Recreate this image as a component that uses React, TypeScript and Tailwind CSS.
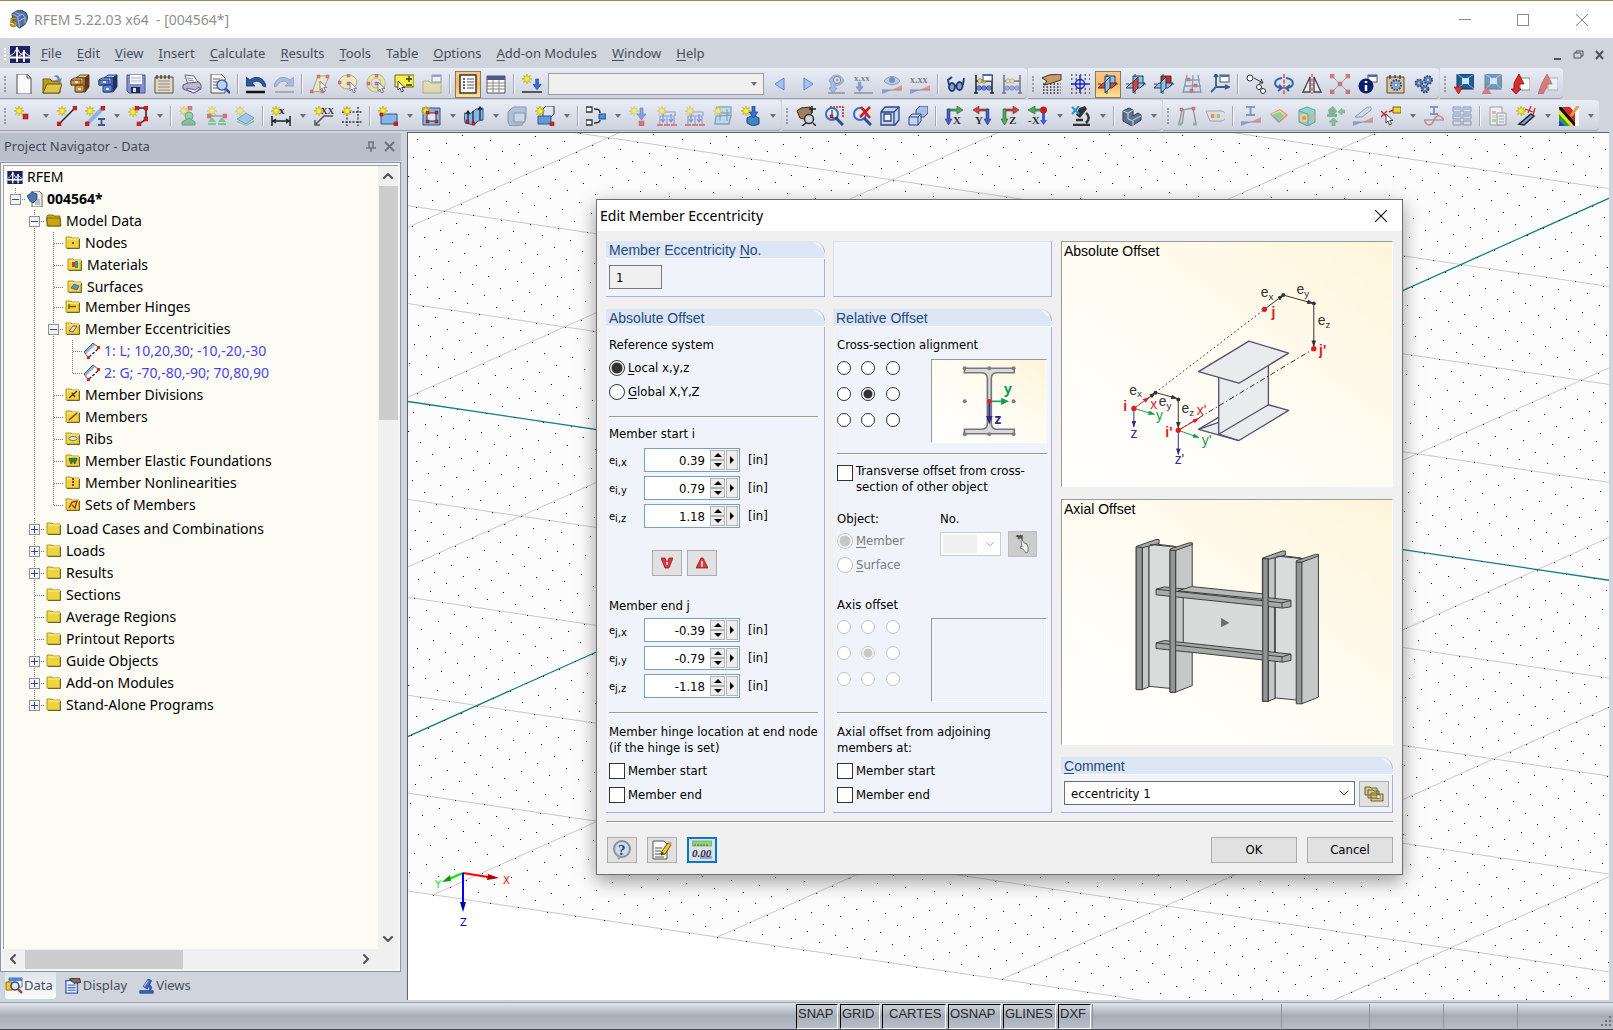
import { useState, type ReactNode } from 'react';
import { ChevronDown, ChevronLeft, ChevronRight, ChevronUp } from 'lucide-react';

const UI_FONT = "font-['Noto_Sans','Open_Sans',sans-serif]";
const DIALOG_FONT = "font-['DejaVu_Sans_Condensed','DejaVu_Sans',sans-serif]";
const HEAD_FONT = "font-['Liberation_Sans',Arial,sans-serif]";

/* ---------- small icon parts ---------- */

const Star = ({ x = 0, y = 0 }: { x?: number; y?: number }) => (
  <path
    transform={`translate(${x} ${y})`}
    d="M5 0l.9 3 2.6-1.6L6.9 4 10 5l-3.1.9 1.6 2.7L5.900 7 5 10l-.9-3-2.600 1.600L3.100 5.900 0 5l3.100-1L1.500 1.400 4.100 3z"
    fill="#fbee2c"
    stroke="#b5a820"
    strokeWidth=".6"
  />
);

const Dot = ({ x, y, s = 4 }: { x: number; y: number; s?: number }) => (
  <rect x={x} y={y} width={s} height={s} fill="#e01f1f" stroke="#8d1010" strokeWidth=".5" />
);

const Pointer = ({ x = 0, y = 0 }: { x?: number; y?: number }) => (
  <path
    transform={`translate(${x} ${y})`}
    d="M0 0v9l2-2 1.500 4 2-1-1.700-3.500H7z"
    fill="#fff"
    stroke="#333"
    strokeWidth=".9"
  />
);

const Slope = () => (
  <>
    <path d="M10 16l10-5v5z" fill="#ef5a5a" />
    <path d="M0 16h10L0 20z" fill="#5668e8" />
    <path d="M0 16h20" stroke="#555" />
  </>
);

const Caps = ({ children, x, y, size = 12, color = '#333' }: { children: string; x: number; y: number; size?: number; color?: string }) => (
  <text x={x} y={y} fontSize={size} fill={color} fontFamily="Liberation Serif" fontWeight="bold">{children}</text>
);

const Cabinet = ({ top, front, line }: { top: string; front: string; line: string }) => (
  <g stroke={line} strokeWidth=".9">
    <path d="M6 4l4-3h9l-4 3z" fill={top} />
    <path d="M15 4l4-3v12l-4 5z" fill={line} />
    <path d="M6 4h9v14H6z" fill={front} />
    <path d="M1 6l3-2h9v6l-2 1H1z" fill={top} />
    <path d="M1 6h10v5H1zM5 12l2-1h7v6l-2 1H5z" fill={front} />
    <path d="M5 8h3M8 15h3" stroke="#fff" strokeWidth="1.500" />
  </g>
);

const Planes = ({ a, b, c }: { a: string; b: string; c: string }) => (
  <g stroke="#16324f" strokeWidth=".9" strokeLinejoin="round">
    <path d="M7 2h10v10H7z" fill={a} />
    <path d="M0 14l5-5h14l-5 5z" fill={b} />
    <path d="M7 8l5-5v11l-5 5z" fill={c} />
    <path d="M9 0v20M0 10h20" stroke="#16324f" fill="none" strokeDasharray="3 14 3" />
  </g>
);

const Arrow3 = ({ h, v, label, flip }: { h: string; v: string; label: string; flip?: boolean }) => (
  <>
    <g transform={flip ? 'translate(20 0) scale(-1 1)' : undefined}>
      <path d="M4 3h9V0l6 4-6 4V5H4z" fill={h} stroke="#333" strokeWidth=".5" />
      <path d="M3 3h3v10h2l-3.500 6L1 13h2z" fill={v} stroke="#333" strokeWidth=".5" />
    </g>
    <Caps x={flip ? 3 : 9} y={18} size={11}>{label}</Caps>
  </>
);

const Abacus = () => (
  <>
    <path d="M2 1v18M18 1v18M0 19h4M16 19h4M2 7h16M2 14h16" stroke="#222" strokeWidth="1.500" fill="none" />
    <g fill="#e8dc8a" stroke="#6d6420" strokeWidth=".6"><circle cx="6" cy="7" r="2.200" /><circle cx="10" cy="7" r="2.200" /></g>
    <g fill="#6a88e6" stroke="#22307c" strokeWidth=".6"><circle cx="5" cy="14" r="2.300" /><circle cx="10" cy="14" r="2.300" /><circle cx="15" cy="14" r="2.300" /></g>
  </>
);

const Gear = ({ x, y, r, fill = '#5f86c8' }: { x: number; y: number; r: number; fill?: string }) => (
  <>
    <circle cx={x} cy={y} r={r} fill={fill} stroke="#27406f" strokeWidth="1.800" strokeDasharray="1.600 1.200" />
    <circle cx={x} cy={y} r={r * 0.35} fill="#fff" stroke="#27406f" strokeWidth=".5" />
  </>
);

const Frames = () => (
  <g fill="none" stroke="#5574b5" strokeWidth="1.200">
    <path d="M3 18V10h7v8M10 10h7v8M6 10V6h12v4" />
    <path d="M6 8v7M14 8v7M4 13l2 3 2-3M12 13l2 3 2-3" stroke="#2a56d8" />
    <path d="M0 19h6M7 19h6M14 19h6" stroke="#e03030" strokeWidth="2" />
  </g>
);

const DownArrow = ({ x = 0, y = 0 }: { x?: number; y?: number }) => (
  <path transform={`translate(${x} ${y})`} d="M3 0h3v6h3L4.500 12 0 6h3z" fill="#3d6fd8" stroke="#1e3d88" strokeWidth=".7" />
);

const Screen = ({ up }: { up?: boolean }) => (
  <>
    <path d="M3 0h17v15H3z" fill="#1f5f96" stroke="#0f3255" />
    <path d="M3 0l6 4M20 0l-6 4M3 15l6-5M20 15l-6-5" stroke="#7db3dd" />
    <path d="M8 4h7v6H8z" fill="#cfe4f5" />
    <path d={up ? 'M0 20h9l-4.500-7z' : 'M0 13h9l-4.500 7z'} fill="#e43030" stroke="#8d1010" strokeWidth=".6" />
  </>
);

const Window = ({ x, y }: { x: number; y: number }) => (
  <>
    <rect x={x} y={y} width="9" height="7" fill="#fff" stroke="#555" />
    <path d={`M${x} ${y + 1}h9`} stroke="#4a6cc0" strokeWidth="2" />
  </>
);

const icons: Record<string, ReactNode> = {
  newDoc: <path d="M3 0h10l4 4v16H3zM13 0v4h4" fill="#fbfbfd" stroke="#555" />,
  open: <><path d="M1 5h7l2 2h8v12H1z" fill="#b79a22" stroke="#6d5a0e" /><path d="M1 19l4-9h15l-3 9z" fill="#dcc54a" stroke="#6d5a0e" /><path d="M11 3c3-3 6-2 7 2l2-1-2 5-4-3 2-.5C15 3 13 2 11 3z" fill="#5d86b8" /></>,
  cabinetBrown: <Cabinet top="#f0c890" front="#cd9148" line="#5a3812" />,
  cabinetBlue: <Cabinet top="#a9c2f2" front="#5880d8" line="#1d3168" />,
  save: <><path d="M1 1h18v18H3l-2-2z" fill="#7f8fd0" stroke="#4a5590" /><path d="M4 1h12v9H4z" fill="#f5f5f8" /><path d="M5 4h10M5 7h10" stroke="#b0b4c8" /><path d="M5 13h9v6H5z" fill="#222a4e" /><path d="M7 14h3v4H7z" fill="#dde" /></>,
  notes: <><path d="M1 3h18v16H1z" fill="#e5d9c4" stroke="#5b5243" /><path d="M4 7h12M4 10h12M4 13h12M4 16h12" stroke="#888" /><path d="M3 1v4M7 1v4M11 1v4M15 1v4" stroke="#444" strokeWidth="1.500" /></>,
  print: <><path d="M3 1l9 1 5 8-11 1z" fill="#fff" stroke="#667" /><path d="M5 4l6 1M6 6l6 1" stroke="#889" /><path d="M1 11l5-2 11-1 2 3v4l-7 4-11-4z" fill="#b9bccb" stroke="#55586a" /><path d="M5 14l8 2 4-3v3l-5 3-7-3z" fill="#f6f6fb" stroke="#6a55a0" /></>,
  preview: <><path d="M1 0h10l4 4v15H1z" fill="#f4f4f4" stroke="#555" /><path d="M3 5h7M3 8h8M3 11h6M3 14h5" stroke="#666" /><circle cx="12" cy="11" r="5" fill="#b9d5f3" stroke="#3c66ae" strokeWidth="1.500" /><path d="M16 15l4 4" stroke="#2d4f90" strokeWidth="2.500" /></>,
  undo: <><path d="M0 3v9h9L6 9c4-3 9-2 11 3l3 1C19 3 9 1 4 6z" fill="#2d5799" stroke="#173566" strokeWidth=".8" /><path d="M0 18h19" stroke="#111" strokeWidth="2.500" /></>,
  redo: <><path d="M20 3v9h-9l3-3C10 6 5 7 3 12l-3 1C1 3 11 1 16 6z" fill="#7fa0cc" stroke="#4a6a98" strokeWidth=".8" /><path d="M1 18h19" stroke="#888" strokeWidth="2" /></>,
  selRhomb: <><path d="M2 18L8 2h11l-6 15z" fill="#f5efa9" stroke="#7a6e3a" /><Dot x={0} y={16} s={3} /><Dot x={7} y={1} s={3} /><Dot x={16} y={1} s={3} /><Dot x={11} y={16} s={3} /><Pointer x={10} y={7} /></>,
  selEllipse: <><ellipse cx="10" cy="8" rx="9" ry="7" fill="#f7f0a0" stroke="#8b7f4a" /><Dot x={0} y={7} s={3} /><Dot x={9} y={0} s={3} /><Dot x={9} y={8} s={3} /><Pointer x={12} y={8} /></>,
  selRing: <><circle cx="10" cy="9" r="7" fill="none" stroke="#8b7f4a" strokeWidth="5" /><circle cx="10" cy="9" r="7" fill="none" stroke="#f7ea5c" strokeWidth="3.500" /><Dot x={9} y={8} s={3} /><Dot x={1} y={8} s={3} /><Dot x={9} y={0} s={3} /><Pointer x={12} y={8} /></>,
  selPlus: <><path d="M1 1h19v12H1z" fill="#f9ee43" stroke="#6f6718" /><path d="M12 5h6M15 2v6M12 11h6" stroke="#333" strokeWidth="1.300" /><Pointer x={4} y={7} /></>,
  folderWin: <><path d="M1 7h6l2 2h10v10H1z" fill="#e5dd83" stroke="#8f8848" /><Window x={10} y={1} /></>,
  navigator: <><path d="M2 1h16v18H2z" fill="#fff" stroke="#333" strokeWidth="1.500" /><path d="M5 5h2M5 8h2M5 11h2M5 14h2" stroke="#333" strokeWidth="1.500" /><path d="M9 5h7M9 8h7M9 11h7M9 14h7" stroke="#555" /></>,
  table: <><path d="M1 2h18v17H1z" fill="#fff" stroke="#555" /><path d="M1 2h18v4H1z" fill="#4b5a86" /><path d="M1 9h18M1 12h18M1 15h18M7 6v13M13 6v13" stroke="#888" /></>,
  loadStar: <><Star /><g transform="translate(11 5) scale(.9)"><DownArrow /></g><path d="M0 18h20" stroke="#555" strokeWidth="2" /></>,
  prev: <path d="M14 4v12L5 10z" fill="#a9c2f2" stroke="#5d82cc" />,
  next: <path d="M6 4v12l9-6z" fill="#a9c2f2" stroke="#5d82cc" />,
  eyeArrow: <><path d="M3 7c3-8 12-8 15 0-3 4-6 5-9 4v3h2l-4 5-4-5h2V9z" fill="#7ca0dd" stroke="#3d5c99" strokeWidth=".8" /><circle cx="11" cy="6" r="3.500" fill="#fff" stroke="#223" /><circle cx="11" cy="6" r="1.500" fill="#3d5c99" /><path d="M2 19h17" stroke="#777" strokeWidth="2" /></>,
  xxArrow: <><Caps x={0} y={7} size={9}>x.xx</Caps><g transform="translate(2 8) scale(.8)"><DownArrow /></g><path d="M0 19h19" stroke="#777" strokeWidth="2" /></>,
  eyeSlope: <><path d="M2 7c4-6 12-6 16 0-4 5-12 5-16 0z" fill="#9db9ea" stroke="#4a5f8a" /><circle cx="10" cy="6" r="3" fill="#2d4a86" /><Slope /></>,
  xxSlope: <><Caps x={0} y={9} size={10}>x.xx</Caps><Slope /></>,
  glasses: <g fill="#7f9fd6" stroke="#22396d" strokeWidth="1.800"><ellipse cx="6" cy="13" rx="3" ry="4" /><ellipse cx="13.500" cy="12" rx="3" ry="4" /><path d="M3 11L2 6l4-3M17 11l1-7M9 12l2-1" fill="none" /></g>,
  abacusWin: <><Abacus /><Window x={9} y={0} /></>,
  abacus: <Abacus />,
  handGrid: <><path d="M1 10h18M1 13h18M1 16h18M1 19h18" stroke="#333" strokeWidth="1.500" strokeDasharray="1.500 2" /><path d="M0 4l7-3 12-1v6l-9 3-8 2 3-4z" fill="#c99b6b" stroke="#4a3118" /></>,
  gridBlue: <><path d="M1 1h19M1 5h19M1 10h19M1 15h19M1 19h19" stroke="#444" strokeWidth="1.300" strokeDasharray="1.500 3" /><circle cx="10" cy="10" r="4.500" fill="none" stroke="#1c2ac4" strokeWidth="1.500" /><path d="M10 1v18M1 10h18" stroke="#1c2ac4" strokeWidth="1.500" /></>,
  planeXY: <Planes a="#8fc0e6" b="#e4402c" c="#8fc0e6" />,
  planeYZ: <Planes a="#8fc0e6" b="#8fc0e6" c="#e4402c" />,
  planeXZ: <Planes a="#e8201c" b="#8fc0e6" c="#8fc0e6" />,
  gridLines: <><path d="M5 1L1 19M11 1l-1 18M16 1l3 18M3 6h15M2 12h17M1 18h18" stroke="#44688f" strokeWidth="1.300" fill="none" /><Dot x={5} y={4} s={3} /><Dot x={12} y={10} s={3} /><Dot x={8} y={15} s={3} /></>,
  axesWin: <><path d="M6 1v12l-5 5M6 13h12M4 3l2-3 2 3M15 11l4 2-4 2" fill="none" stroke="#3a5a92" strokeWidth="1.800" /><Window x={10} y={1} /></>,
  copy: <g fill="#fff" stroke="#333"><circle cx="4" cy="4" r="3" /><circle cx="13" cy="13" r="2.500" /><circle cx="17" cy="17" r="2.500" /><path d="M8 4l9 5M17 9l-2-4M17 9h-4" /></g>,
  rotate: <><path d="M8 4C-1 5-1 13 7 14M12 4c9 1 9 9 1 10M5 11l3 3-4 3M16 11l-4 3 3 3" fill="none" stroke="#2f64a8" strokeWidth="2" /><path d="M10 0v20" stroke="#e03030" strokeWidth="1.300" strokeDasharray="4 1.500" /></>,
  mirror: <><path d="M8 3v15H1zM12 3v15h7z" fill="#eee" stroke="#444" strokeWidth="1.300" /><path d="M10 0v20" stroke="#e03030" strokeDasharray="3 1.500" /></>,
  nodesX: <><path d="M3 3l14 14M17 3L3 17" stroke="#777" /><Dot x={0} y={0} /><Dot x={16} y={0} /><Dot x={0} y={16} /><Dot x={16} y={16} /><Dot x={8} y={8} /></>,
  info: <><Window x={10} y={1} /><circle cx="8" cy="12" r="7.500" fill="#0c1d6c" /><path d="M8 7v2M8 11v6" stroke="#fff" strokeWidth="2.500" /></>,
  gearPanel: <><path d="M1 3h17v16H1z" fill="#d9c39a" stroke="#5c4a27" /><Gear x={10} y={11} r={5} fill="#8ba9dc" /><path d="M4 1v4M9 1v3M14 1v4" stroke="#444" strokeWidth="1.500" /></>,
  gears: <><Gear x={14} y={6} r={4} /><Gear x={5} y={9} r={3.5} /><Gear x={11} y={15} r={3.5} /></>,
  screenDown: <Screen />,
  screenUp: <Screen up />,
  redDown: <><path d="M10 4h10v12H10z" fill="#fff" stroke="#888" /><path d="M9 0l5 10H9v5h2l-5 5-5-5h3V9z" fill="#dd2a2a" stroke="#7b0f0f" strokeWidth=".8" /></>,
  redUp: <><path d="M10 4h10v12H10z" fill="#fff" stroke="#888" /><path d="M9 0l5 10H9v4H8l-3 6H0l4-11z" fill="#dd2a2a" stroke="#7b0f0f" strokeWidth=".8" /></>,

  node: <><Star /><Dot x={9} y={8} s={5} /></>,
  line: <><path d="M2 18L18 2" stroke="#222" strokeWidth="1.500" /><Star /><Dot x={0} y={16} /><Dot x={16} y={0} /></>,
  member: <><path d="M3 17L18 2" stroke="#8db4e2" strokeWidth="4" /><Star /><Dot x={0} y={16} /><Dot x={16} y={0} /><path d="M13 13h7M13 19h7M16.500 13v6" stroke="#3a5a92" strokeWidth="1.800" /></>,
  polyline: <><path d="M8 2h10v11l-7 5" fill="none" stroke="#222" strokeWidth="1.500" /><Star y={1} /><Dot x={7} y={0} /><Dot x={16} y={0} /><Dot x={16} y={11} /><Dot x={9} y={16} /></>,
  supportNode: <><Star /><Dot x={9} y={0} /><ellipse cx="10" cy="10" rx="4" ry="4" fill="#5cc878" stroke="#1f6c35" /><path d="M10 12l6 4v3H3v-3z" fill="#3fae5b" stroke="#1f6c35" /></>,
  supportLine: <><Star /><path d="M2 10h16" stroke="#333" /><Dot x={0} y={8} /><Dot x={16} y={8} /><path d="M5 11l4 5H1zM15 11l4 5h-8zM1 17h8v2H1zM11 17h8v2h-8z" fill="#3fae5b" /></>,
  supportSurf: <><path d="M2 13l9-6 8 5-8 6z" fill="#74b6e8" stroke="#2b6796" /><path d="M2 15l9 4 8-5v2l-8 4-9-4z" fill="#3fae5b" /><Star /></>,
  dimension: <><path d="M1 10v10M19 10v10M2 15h16M5 13l-3 2 3 2M15 13l3 2-3 2" stroke="#222" strokeWidth="1.500" fill="none" /><Star /><Caps x={8} y={8} size={11}>x</Caps></>,
  leader: <><path d="M19 10h-9l-9 9M1 14v5h5" stroke="#555" strokeWidth="1.500" fill="none" /><Star /><Caps x={7} y={8} size={9}>XX</Caps></>,
  gridNew: <><path d="M5 1v19M16 1v19M0 6h20M0 16h20" stroke="#333" strokeWidth="1.300" strokeDasharray="2 1.500" /><Star /></>,
  surface: <><path d="M3 8h16v10H3z" fill="#86b6e4" stroke="#2c5888" /><Star /><Dot x={2} y={7} s={3} /><Dot x={16} y={16} s={4} /></>,
  opening: <><path d="M2 2h17v17H2z" fill="#86b6e4" stroke="#2c5888" /><path d="M6 7h9v8H6z" fill="#dde7f1" stroke="#333" /><Star /><Dot x={5} y={5} s={3} /><Dot x={14} y={5} s={3} /><Dot x={5} y={14} s={3} /><Dot x={14} y={14} s={3} /></>,
  intersection: <><path d="M0 7l6 1 6-5 7-1v12l-5 1-4 4-9-2z" fill="#86b6e4" stroke="#2c5888" /><path d="M4 6v12M9 5v14M16 1v13M2 8l2-3 2 3M14 4l2-3 2 3" stroke="#222" strokeWidth="1.300" fill="none" /><Dot x={2} y={14} s={3} /><Dot x={8} y={16} s={3} /></>,
  solid: <><path d="M1 6l5-5h13v11l-4 7-12 1-2-4z" fill="#8ca5c8" stroke="#44597c" /><path d="M7 7h11v9H7z" fill="#c4d2e6" stroke="#44597c" /></>,
  solidNew: <><path d="M8 3l3-3h8v8l-3 3H8z" fill="#dde6f2" stroke="#333" /><path d="M3 10h13v8H3z" fill="#5e9bd8" stroke="#2c5888" /><Star /><Dot x={15} y={16} /></>,
  join: <><path d="M0 1h6v5H0zM0 14h6v5H0z" fill="#fff" stroke="#333" strokeWidth="1.300" /><path d="M8 3c5 0 6 1 6 4M8 17c5 0 6-1 6-3" fill="none" stroke="#333" strokeWidth="1.500" /><path d="M13 8h7v5h-7z" fill="#4a90e0" stroke="#1e4e8d" /></>,
  nodalLoad: <><Star /><DownArrow x={8} y={2} /><Dot x={10} y={15} s={5} /></>,
  frameLoad: <><Frames /><Star /></>,
  areaLoad: <><path d="M4 1h14v6H4zM3 10l15-1-2 9H2z" fill="#a7d8e4" stroke="#44789a" strokeWidth="1.500" /><path d="M7 3v12M14 3v12" stroke="#3456c8" /><Star /></>,
  solidLoad: <><path d="M6 12l6-3 6 3v6l-6 2-6-3z" fill="#3f86c4" stroke="#1d466d" /><DownArrow x={8} y={0} /><Star /></>,
  pan: <><path d="M1 5l4-3 9-1 2 5-2 5-6 2-4-1z" fill="#a07f5e" stroke="#33271a" /><circle cx="13" cy="13" r="4.500" fill="#d0d5da" stroke="#333" strokeWidth="1.500" /><path d="M10 17l-4 3M16 0v7M13 3h7M17 17l3 3" stroke="#222" strokeWidth="1.500" /></>,
  zoomWin: <><path d="M6 1h13v11" fill="none" stroke="#c22" strokeDasharray="2 1" strokeWidth="1.500" /><circle cx="8" cy="8" r="6" fill="#dceafa" stroke="#3c6cc4" strokeWidth="2" /><path d="M12 12l7 7" stroke="#2d4f90" strokeWidth="3" /><path d="M8 4v8h6" stroke="#222" fill="none" /><Dot x={6} y={9} s={3} /></>,
  zoomDel: <><circle cx="8" cy="8" r="6" fill="#dceafa" stroke="#3c6cc4" strokeWidth="2" /><path d="M12 12l7 7" stroke="#2d4f90" strokeWidth="3" /><path d="M9 1l9 11M18 1L8 11" stroke="#d61a1a" strokeWidth="2.500" /></>,
  box: <g fill="#c5d4ec" stroke="#2c4684" strokeWidth="1.300"><path d="M1 6l4-5h14v13l-4 5H1z" /><path d="M1 6h13v13M14 6l5-5" fill="none" /><path d="M4 8h7v7H4z" fill="#eef3fb" /></g>,
  boxes: <g fill="#a9bde4" stroke="#2c4684" strokeWidth="1"><path d="M8 4l4-4h8v7l-4 4H8z" /><path d="M1 11l3-3h9v7l-3 4H1z" fill="#c8d5f0" /><path d="M1 11h9v8M10 11l3-3" fill="none" /></g>,
  viewX: <Arrow3 h="#3db54a" v="#3b5be0" label="X" />,
  viewY: <Arrow3 h="#e03a3a" v="#3b5be0" label="Y" flip />,
  viewZ: <Arrow3 h="#e03a3a" v="#3db54a" label="Z" />,
  viewMinusX: <><path d="M15 3H7V0L0 4l7 4V5h8z" fill="#3db54a" stroke="#333" strokeWidth=".5" /><path d="M14 5h3v9h2l-3.500 5L12 14h2z" fill="#3b5be0" /><circle cx="15.500" cy="4" r="3.500" fill="#c81e1e" /><Caps x={0} y={18} size={11}>-X</Caps></>,
  microscope: <><path d="M8 2l6-2 2 3-7 9-4-3z" fill="#333" /><path d="M2 19h17M15 17c4-4 3-8 0-10M5 14h7" fill="none" stroke="#333" strokeWidth="2.500" /><path d="M1 1l7 7M8 0L1 8" stroke="#2f8fe0" strokeWidth="2" /></>,
  lBlock: <><path d="M1 5l6-3 4 2v6l5-3 3 2v5l-9 6-9-5z" fill="#5e748e" stroke="#2b3a4e" /><path d="M1 5l5 2v6l5 2v5M6 7l5-3M11 14l8-4" fill="none" stroke="#cfdae6" /></>,
  deformed: <><path d="M2 18L5 4l11-2 3 16M5 18L7 5" fill="none" stroke="#555" strokeWidth="1.300" /><Dot x={3} y={2} s={3} /><Dot x={15} y={1} s={3} /><path d="M1 18h4M16 18h4" stroke="#3fae5b" strokeWidth="3" /></>,
  scale: <><path d="M1 5h15a4 4 0 010 10H5z" fill="#ddd" stroke="#777" /><path d="M6 8h3v4H6z" fill="#e33" /><path d="M9 8h3v4H9z" fill="#ec3" /><path d="M12 8h3v4h-3z" fill="#4b5" /></>,
  forces: <><path d="M5 1h9M5 9h9M9.500 1v8" stroke="#3a5a92" strokeWidth="2" /><Slope /></>,
  surfColor: <><path d="M1 8l10-5 8 6-9 8z" fill="#e43b2f" /><path d="M2 8l9-4 6 5-7 6z" fill="#f5d431" /><path d="M3 9l8-3 4 4-6 5z" fill="#4fc15c" /><path d="M1 8l2 1 6 5 1 3z" fill="#3f62dd" /></>,
  cubeColor: <><path d="M2 4l8-3 8 3v12l-7 4-9-4z" fill="#4fc8b8" stroke="#25605a" /><circle cx="7" cy="12" r="4" fill="#f5d431" /><circle cx="7" cy="12" r="2" fill="#e43b2f" /><circle cx="15" cy="11" r="2.500" fill="#e88b2f" /><path d="M2 5l9 3v11" fill="none" stroke="#25605a" /></>,
  reactions: <><path d="M8 0l4 5-2 3H4L3 4zM2 8h10v3H2z" fill="#3b8f4e" /><path d="M8 12l-4 4h3v4h3v-4h3zM20 4h-3V2l-4 4 4 3V7h3z" fill="#3fae5b" stroke="#1f6c35" strokeWidth=".5" /></>,
  section: <><path d="M2 11L13 2c4-2 6-1 5 2l-9 7z" fill="#c8d6e8" stroke="#44597c" /><Slope /></>,
  valuePick: <><path d="M12 1h8v6h-8z" fill="#f0d238" stroke="#77661a" /><path d="M0 5l6 6M6 5l-6 6M8 6l4-2" stroke="#d02a2a" strokeWidth="1.500" /><Pointer x={5} y={8} /></>,
  diagram: <><path d="M6 1h8M6 8h8M10 1v7" stroke="#3a5a92" strokeWidth="2" /><path d="M0 14h20" stroke="#444" /><path d="M0 14c4 8 8 5 10 0 3-6 7-5 10 0" fill="none" stroke="#e03030" strokeWidth="1.500" /></>,
  tiles: <><path d="M1 1h8v5H1zM11 1h8v5h-8zM1 8h8v5H1zM11 8h8v5h-8zM1 15h8v4H1zM11 15h8v4h-8z" fill="#d7e0ef" stroke="#4a5f8a" /><path d="M2 3h6M12 3h6M2 10h6M12 10h6" stroke="#3456c8" /></>,
  report: <><path d="M2 1h12v18H2z" fill="#fff" stroke="#666" /><path d="M4 5h4v3H4z" fill="#e88" /><path d="M4 9h4v3H4z" fill="#dd6" /><path d="M4 13h4v3H4z" fill="#6c8" /><path d="M9 7h9v12H9z" fill="#f4f4f8" stroke="#666" /><path d="M11 10h5M11 13h5M11 16h5" stroke="#777" /></>,
  resultNew: <><path d="M3 18L15 8l3 2-10 9z" fill="#7fa2d8" stroke="#222" strokeWidth="1.500" /><path d="M9 3l8 3M15 0l-3 7M17 9l2-7" stroke="#d02a2a" strokeWidth="1.300" /><Star /></>,
  palette: <><path d="M0 1h20v19H0z" fill="#fff" /><path d="M0 1h3l13 15v4h-3L0 5z" fill="#111" /><path d="M0 3l15 17H9L0 10z" fill="#f4e01e" /><path d="M0 8l11 12H5L0 14z" fill="#23a33a" /><path d="M0 14l6 6H0z" fill="#2340d8" /><path d="M3 1h8l5 6v9z" fill="#e22121" /><path d="M19 0l-7 10" stroke="#d9a24b" strokeWidth="3" /></>,
};

/* ---------- toolbars ---------- */

// "|" separator, "v" drop-down arrow, leading "~" disabled, leading "!" pressed, "combo" the load case list
const rowOne = [
  'newDoc open cabinetBrown cabinetBlue save notes print preview | undo ~redo | ~selRhomb ~selEllipse ~selRing selPlus ~folderWin | !navigator table | loadStar combo prev next ~eyeArrow ~xxArrow ~eyeSlope ~xxSlope | glasses abacusWin ~abacus',
  'handGrid gridBlue !planeXY planeYZ planeXZ ~gridLines axesWin | copy rotate mirror ~nodesX info gearPanel gears',
  'screenDown ~screenUp redDown ~redUp',
];
const rowTwo = [
  'node v line member v polyline v | ~supportNode ~supportLine ~supportSurf | dimension v leader gridNew | surface v opening v intersection v ~solid solidNew v | join v ~nodalLoad ~frameLoad ~frameLoad ~areaLoad solidLoad v',
  'pan zoomWin zoomDel box boxes | viewX viewY viewZ viewMinusX v microscope v | lBlock v',
  '~deformed ~scale | ~forces ~surfColor ~cubeColor ~reactions ~section valuePick v ~diagram ~tiles | ~report resultNew v palette v',
];

function ToolIcon({ name }: { name: string }) {
  return <svg viewBox="0 0 20 20" className="size-5">{icons[name]}</svg>;
}

function ToolItem({ token }: { token: string }) {
  if (token === '|') return <span className="mx-[3px] h-5 w-0.5 shrink-0 border-l border-[#a3a8b4] bg-[#f5f7fb]" />;
  if (token === 'v') {
    return (
      <button aria-label="More" className="flex h-6 w-[15px] shrink-0 items-center justify-center">
        <span className="border-x-[3px] border-t-4 border-x-transparent border-t-[#6b7078]" />
      </button>
    );
  }
  if (token === 'combo') {
    return (
      <div className="mx-0.5 flex h-[22px] w-[216px] shrink-0 items-center justify-end border border-[#9a9da3] bg-[#f0f0f0] px-1.5">
        <button aria-label="Load case" className="border-x-[3px] border-t-4 border-x-transparent border-t-[#6b7078]" />
      </div>
    );
  }
  const name = token.replace(/^[~!]/, '');
  if (token[0] === '!') {
    return (
      <button aria-label={name} aria-pressed="true" className="mx-px flex h-[27px] w-[26px] shrink-0 items-center justify-center border border-[#8a7a5c] bg-linear-to-b from-[#f8c88c] via-[#fbb75c] to-[#fde49a]">
        <ToolIcon name={name} />
      </button>
    );
  }
  return (
    <button aria-label={name} disabled={token[0] === '~'} className="flex h-6 w-7 shrink-0 items-center justify-center disabled:opacity-55">
      <ToolIcon name={name} />
    </button>
  );
}

function ToolbarRow({ groups }: { groups: string[] }) {
  return (
    <div className="flex h-8 gap-px overflow-hidden">
      {groups.map((g) => (
        <div key={g} role="toolbar" className="flex h-[31px] shrink-0 items-center rounded-r-sm border-b border-[#9fa3ad] bg-linear-to-b from-[#e9edf6] to-[#cdd2de] pt-0.5 pr-px">
          <span className="mr-[3px] ml-1 h-4 w-[3px] border-l-2 border-dotted border-[#9a9fab]" />
          {g.split(' ').map((t, i) => <ToolItem key={i} token={t} />)}
        </div>
      ))}
    </div>
  );
}

/* ---------- title and menu ---------- */

const menus = ['_File', '_Edit', '_View', '_Insert', '_Calculate', '_Results', '_Tools', 'Ta_ble', '_Options', '_Add-on Modules', '_Window', '_Help'];

// the letter after "_" is the access key
function Mnemonic({ text }: { text: string }) {
  const i = text.indexOf('_');
  if (i < 0) return <>{text}</>;
  return <>{text.slice(0, i)}<span className="underline underline-offset-2">{text[i + 1]}</span>{text.slice(i + 2)}</>;
}

const Bridge = ({ className }: { className: string }) => (
  <svg viewBox="0 0 20 17" className={className}>
    <path d="M0 0h20v17H0z" fill="#1d2260" />
    <path d="M7 1v15M14 4v12" stroke="#fff" strokeWidth="1.800" />
    <path d="M7 2Q5 8 0 10M7 2q2 6 7 8M14 5q2 4 6 5M14 5q-2 4-5 5" stroke="#fff" fill="none" />
    <path d="M0 10.500h20v2H0z" fill="#fff" />
  </svg>
);

function TitleBar() {
  return (
    <header className="flex h-[38px] items-center border-t border-[#9a8a50] bg-white pr-0.5 pl-[9px]">
      <svg viewBox="0 0 20 20" className="size-[19px]">
        <path d="M3 4l5-3 5-1 5 3 2 5-3 7-6 4-6-5z" fill="#5673a3" stroke="#26395b" />
        <path d="M3 4l6 3 5-3M9 7l1 5 7-4M10 12l1 6M14 4l3 4v6M6 2l6 3" stroke="#a9bfe2" fill="none" />
        <text x="1" y="18" fontSize="13" fontWeight="bold" fill="#f2bd1d" stroke="#6a4d05" strokeWidth=".6" fontFamily="Liberation Sans">5</text>
      </svg>
      <h1 className="ml-1.5 text-[14px] whitespace-pre text-[#8f8f8f]">RFEM 5.22.03 x64  - [004564*]</h1>
      <div className="ml-auto flex text-[#8a8a8a]">
        <button aria-label="Minimize" className="flex h-9 w-[58px] items-center justify-center"><span className="h-px w-3 bg-current" /></button>
        <button aria-label="Maximize" className="flex h-9 w-[58px] items-center justify-center"><span className="size-3 border border-current" /></button>
        <button aria-label="Close" className="flex h-9 w-[59px] items-center justify-center">
          <svg viewBox="0 0 12 12" className="size-3"><path d="M0 0l12 12M12 0L0 12" stroke="currentColor" /></svg>
        </button>
      </div>
    </header>
  );
}

function MenuBar() {
  return (
    <nav className="flex h-[30px] items-center pt-0.5 pr-2 pl-1">
      <span className="mr-1 h-3 w-0.5 border-l-2 border-dotted border-white" />
      <Bridge className="h-[17px] w-5" />
      <div className="ml-[11px] flex gap-[15px]">
        {menus.map((m) => (
          <button key={m} className="text-[13px] text-[#474d5c]"><Mnemonic text={m} /></button>
        ))}
      </div>
      <svg viewBox="0 0 52 12" className="mt-0.5 ml-auto h-3 w-[52px]" fill="none" stroke="#50545c">
        <path d="M1 10h7" strokeWidth="2" />
        <path d="M21 4h7v5h-7zM23 4V2h7v5h-2" />
        <path d="M43 2l7 8M50 2l-7 8" strokeWidth="2" />
      </svg>
    </nav>
  );
}

/* ---------- project navigator ---------- */

type TreeNode = {
  depth: number;
  label: string;
  icon: string;
  rails: string; // one letter per column: "." blank, "|" pass through, "t" branch, "l" last branch
  toggle?: '+' | '-';
  extra?: string;
  row?: string;
};

const tree: TreeNode[] = [
  { depth: 1, label: '004564*', icon: 'doc', rails: 'l', toggle: '-', extra: 'font-bold' },
  { depth: 2, label: 'Model Data', icon: 'open', rails: '.t', toggle: '-' },
  { depth: 3, label: 'Nodes', icon: 'node', rails: '.|t' },
  { depth: 3, label: 'Materials', icon: 'material', rails: '.|t', extra: 'pl-0.5' },
  { depth: 3, label: 'Surfaces', icon: 'surface', rails: '.|t', extra: 'pl-0.5' },
  { depth: 3, label: 'Member Hinges', icon: 'hinge', rails: '.|t', row: '-mt-0.5' },
  { depth: 3, label: 'Member Eccentricities', icon: 'ecc', rails: '.|t', toggle: '-' },
  { depth: 4, label: '1: L; 10,20,30; -10,-20,-30', icon: 'eccItem', rails: '.||t', extra: 'text-[#4a44e8]' },
  { depth: 4, label: '2: G; -70,-80,-90; 70,80,90', icon: 'eccItem', rails: '.||l', extra: 'text-[#4a44e8]' },
  { depth: 3, label: 'Member Divisions', icon: 'division', rails: '.|t' },
  { depth: 3, label: 'Members', icon: 'member', rails: '.|t' },
  { depth: 3, label: 'Ribs', icon: 'rib', rails: '.|t' },
  { depth: 3, label: 'Member Elastic Foundations', icon: 'elastic', rails: '.|t' },
  { depth: 3, label: 'Member Nonlinearities', icon: 'nonlinear', rails: '.|t' },
  { depth: 3, label: 'Sets of Members', icon: 'sets', rails: '.|l' },
  { depth: 2, label: 'Load Cases and Combinations', icon: 'folder', rails: '.t', toggle: '+', row: 'mt-0.5' },
  { depth: 2, label: 'Loads', icon: 'folder', rails: '.t', toggle: '+' },
  { depth: 2, label: 'Results', icon: 'folder', rails: '.t', toggle: '+' },
  { depth: 2, label: 'Sections', icon: 'folder', rails: '.t' },
  { depth: 2, label: 'Average Regions', icon: 'folder', rails: '.t' },
  { depth: 2, label: 'Printout Reports', icon: 'folder', rails: '.t' },
  { depth: 2, label: 'Guide Objects', icon: 'folder', rails: '.t', toggle: '+' },
  { depth: 2, label: 'Add-on Modules', icon: 'folder', rails: '.t', toggle: '+' },
  { depth: 2, label: 'Stand-Alone Programs', icon: 'folder', rails: '.l', toggle: '+' },
];

const folderMarks: Record<string, ReactNode> = {
  node: <path d="M7 7h2v2H7z" fill="#d22" />,
  material: <><path d="M5 5h3v5H5z" fill="#d33" /><path d="M8 4h3v4H8z" fill="#38c" /><path d="M8 8h3v3H8z" fill="#2a5" /></>,
  surface: <path d="M4 9l3-4 5 2-2 4z" fill="#5b8fd6" stroke="#2c4c86" strokeWidth=".6" />,
  hinge: <path d="M4 5v5M4 7.500h7" stroke="#6a5508" strokeWidth="1.300" />,
  ecc: <path d="M4 10l4-5h4l-4 6z" fill="#dfe8f2" stroke="#833" strokeWidth=".9" />,
  division: <path d="M4 11l8-7M7 6l3 4" stroke="#633" strokeWidth="1.500" />,
  member: <path d="M4 11l8-7" stroke="#933" strokeWidth="1.500" />,
  rib: <ellipse cx="8" cy="7.500" rx="4" ry="2" fill="#eee" stroke="#555" strokeWidth=".8" />,
  elastic: <path d="M4 5h8v2l-2 4H9V9H7v2H6L4 7z" fill="#1f8a3c" stroke="#a33" strokeWidth=".5" />,
  nonlinear: <path d="M8 3v9" stroke="#c22" strokeWidth="2" strokeDasharray="2 1" />,
  sets: <path d="M4 11l3-6 5-1-2 7-3-3" fill="none" stroke="#a22" strokeWidth="1.300" />,
};

function TreeIcon({ icon }: { icon: string }) {
  if (icon === 'doc') {
    return (
      <svg viewBox="0 0 16 16" className="size-4">
        <path d="M5 0h7l3 3v13H5z" fill="#f2f2f2" stroke="#666" />
        <path d="M8 9h5M8 11h5M8 13h5" stroke="#888" />
        <path d="M0 5l5-4 5 2v5l-4 4-3-2z" fill="#4b74b0" stroke="#2a4068" strokeWidth=".8" />
      </svg>
    );
  }
  if (icon === 'eccItem') {
    return (
      <svg viewBox="0 0 16 16" className="size-4">
        <path d="M1 10l9-9" stroke="#8fb2dc" strokeWidth="3" />
        <path d="M0 9l9-9 5 4M0 9l4 5" stroke="#333" fill="none" strokeWidth=".8" />
        <path d="M5 14L15 5" stroke="#222" strokeWidth="1.200" strokeDasharray="3 1.500" />
        <path d="M3 13h3v3H3zM13 3h3v3h-3z" fill="#e02020" />
      </svg>
    );
  }
  return (
    <svg viewBox="0 0 16 16" className="size-4">
      {icon === 'open' ? (
        <path d="M1 13V3l1-1h5l1 1h6v10zM0 5h14l1 8H2z" fill="#c9a80f" stroke="#806a08" strokeWidth=".9" />
      ) : (
        <>
          <path d="M1 2h5l1 1h7v10H1z" fill="#efd53d" stroke="#b59a20" />
          <path d="M2 4h12" stroke="#faf0a0" />
          <path d="M14.500 4v9.500H2" fill="none" stroke="#6d6334" />
        </>
      )}
      {folderMarks[icon]}
    </svg>
  );
}

function Rail({ kind, toggle }: { kind: string; toggle?: '+' | '-' }) {
  return (
    <svg viewBox="0 0 19 22" className="h-[22px] w-[19px] shrink-0" fill="none" shapeRendering="crispEdges">
      <g stroke="#777" strokeDasharray="1 1">
        {(kind === '|' || kind === 't') && <path d="M9.500 0v22" />}
        {kind === 'l' && <path d="M9.500 0v11" />}
        {(kind === 't' || kind === 'l') && <path d="M10 11.500h9" />}
      </g>
      {toggle && (
        <>
          <rect x="4.500" y="6.500" width="10" height="10" fill="#f5f5f7" stroke="#8f8f8f" />
          <path d={toggle === '+' ? 'M6 11.500h7M9.500 8v7' : 'M6 11.500h7'} stroke="#2b4a9c" />
        </>
      )}
    </svg>
  );
}

function Navigator() {
  return (
    <aside className="flex w-[401px] shrink-0 flex-col pt-px">
      <div className="flex h-7 items-center justify-between bg-[#b9c0cc] pr-1.5 pl-1 text-[13px] text-[#434956]">
        <h2>Project Navigator - Data</h2>
        <svg viewBox="0 0 30 12" className="h-3 w-[30px]" fill="none" stroke="#6d727c" strokeWidth="1.500">
          <path d="M3 1h6M4 1v6M8 1v6M1 7h10M6 7v4" />
          <path d="M20 1l9 9M29 1l-9 9" strokeWidth="2" />
        </svg>
      </div>
      <div className="mt-px flex min-h-0 flex-1 flex-col border border-[#8f949f] bg-[#f4f6fa] px-0.5 py-0.5">
        <div className="flex min-h-0 flex-1 border-t border-l border-[#9a9fab] bg-[#fcfcf4]">
          <div className="min-w-0 flex-1 overflow-hidden text-[14px] leading-[22px] text-black">
            <div className="flex h-[22px] items-center gap-1 pl-[3px]">
              <Bridge className="h-[13px] w-4" />
              <span>RFEM</span>
            </div>
            <ul role="tree">
              {tree.map((n) => (
                <li key={n.label} role="treeitem" aria-level={n.depth} className={n.row}>
                  <div className="flex h-[22px] items-center pl-0.5">
                    {n.rails.split('').map((k, i) => (
                      <Rail key={i} kind={k} toggle={i === n.rails.length - 1 ? n.toggle : undefined} />
                    ))}
                    <span className={`ml-0.5 flex items-center gap-1 whitespace-nowrap ${n.extra ?? ''}`}>
                      <TreeIcon icon={n.icon} />
                      {n.label}
                    </span>
                  </div>
                </li>
              ))}
            </ul>
          </div>
          <div className="flex w-5 flex-col items-center bg-[#f0f0f0] text-[#505050]">
            <ChevronUp className="my-0.5 size-4" strokeWidth={3} />
            <div className="h-[234px] w-[19px] bg-[#cdcdcd]" />
            <ChevronDown className="mt-auto mb-0.5 size-4" strokeWidth={3} />
          </div>
        </div>
        <div className="flex h-5 items-center bg-[#f0f0f0] pr-6 pl-0.5 text-[#505050]">
          <ChevronLeft className="mr-1 size-4" strokeWidth={3} />
          <div className="h-[19px] w-[158px] bg-[#cdcdcd]" />
          <ChevronRight className="ml-auto size-4" strokeWidth={3} />
        </div>
      </div>
      <div role="tablist" className="flex h-[30px] items-start text-[13px] text-[#474d5c]">
        <button role="tab" aria-selected="true" className="ml-1 flex h-7 items-center gap-px rounded-b-sm border border-t-0 border-[#b9dce0] bg-linear-to-b from-[#dfe3eb] to-[#fbfbfb] pr-[3px]">
          <svg viewBox="0 0 18 18" className="size-[18px]"><path d="M4 1h13v9H4z" fill="#fff" stroke="#4a6cc0" /><path d="M4 1h13v3H4z" fill="#4a86e0" /><path d="M1 5h6v8H1z" fill="#f0c820" stroke="#8b7410" /><circle cx="10" cy="9" r="4" fill="#dbe9f8" stroke="#445" strokeWidth="1.500" /><path d="M13 12l4 4" stroke="#8a5a32" strokeWidth="2.500" /></svg>
          Data
        </button>
        <button role="tab" className="ml-2 flex h-7 items-center gap-0.5">
          <svg viewBox="0 0 18 18" className="size-4"><path d="M1 3h13v14H1z" fill="#eef3fd" stroke="#3c5eb4" strokeWidth="1.500" /><path d="M3 8h9M3 11h9M3 14h9" stroke="#4a76d8" strokeWidth="1.500" /><path d="M5 1l11-1 2 5-8 1z" fill="#86684c" stroke="#33271a" /></svg>
          Display
        </button>
        <button role="tab" className="ml-3 flex h-7 items-center gap-0.5">
          <svg viewBox="0 0 18 18" className="size-[15px]"><path d="M11 0l4 2-5 10-5-3zM1 14h16v3H1zM12 6c4 3 4 7 0 8" fill="#3c66c8" stroke="#223c86" /><path d="M11 2L6 9" stroke="#b9cdf5" strokeWidth="1.500" /></svg>
          Views
        </button>
      </div>
    </aside>
  );
}

/* ---------- work plane ---------- */

const ORIGIN = [561, 352];
const U = [284.2, 42.3];
const V = [164, -73.5];
const at = (a: number, b: number) => [ORIGIN[0] + a * U[0] + b * V[0], ORIGIN[1] + a * U[1] + b * V[1]];

function WorkPlane() {
  let dots = '';
  for (let i = -50; i <= 50; i++) {
    for (let j = -50; j <= 50; j++) {
      const [x, y] = at(i / 10, j / 10);
      if (x < 0 || y < 0 || x > 3000 || y > 2000) continue;
      dots += `M${Math.round(x)} ${Math.round(y)}h1v1h-1z`;
    }
  }
  const steps = [-5, -4, -3, -2, -1, 0, 1, 2, 3, 4, 5];
  const seg = (p: number[], q: number[]) => `M${p[0]} ${p[1]}L${q[0]} ${q[1]}`;
  const lines = steps.filter((s) => s !== 0).map((s) => seg(at(s, -5), at(s, 5)) + seg(at(-5, s), at(5, s))).join('');
  const plane = [at(-5, -5), at(5, -5), at(5, 5), at(-5, 5)].map((p) => p.join(',')).join(' ');

  return (
    <svg className="size-full" fill="none">
      <polygon points={plane} fill="#fcfcfc" />
      <path d={lines} stroke="#cacaca" />
      <path d={seg(at(-5, 0), at(5, 0)) + seg(at(0, -5), at(0, 5))} stroke="#13807f" strokeWidth="1.300" />
      <path d={dots} fill="#000" shapeRendering="crispEdges" />
      <g strokeWidth="2">
        <path d="M55 740l25 4" stroke="#ff0000" />
        <path d="M80 741l11 4-12 2z" fill="#b40000" />
        <path d="M55 740l-14 6" stroke="#00e800" />
        <path d="M42 742l-8 7 9-1z" fill="#0a9a0a" />
        <path d="M55 740v30" stroke="#0000ff" />
        <path d="M52 769h6l-3 10z" fill="#0000a0" />
      </g>
      <g fontSize="10" fontFamily="DejaVu Sans">
        <text x="95" y="751" fill="#ff0000">X</text>
        <text x="27" y="755" fill="#00e800">Y</text>
        <text x="52" y="793" fill="#0000c8">Z</text>
      </g>
    </svg>
  );
}

/* ---------- dialog ---------- */

function Group({ title, className = '', children }: { title?: string; className?: string; children?: ReactNode }) {
  return (
    <section className={`flex flex-col border-r border-b border-[#a9abec] bg-[#f0f4fa] ${title ? 'rounded-tr-xl' : 'border-t border-l border-t-[#d5e3f5] border-l-[#d5e3f5]'} ${className}`}>
      {title && (
        <h3 className={`-mr-px h-[18px] border-b border-white bg-[#dce6f5] pl-[3px] text-[14px] leading-[18px] text-[#1f4a7d] [clip-path:polygon(0_0,calc(100%-12px)_0,100%_12px,100%_100%,0_100%)] ${HEAD_FONT}`}>
          <Mnemonic text={title} />
        </h3>
      )}
      {children}
    </section>
  );
}

const Rule = ({ className = '' }: { className?: string }) => <hr className={`h-0.5 border-t border-b border-t-[#9a9a9a] border-b-white ${className}`} />;

const RADIO = 'shrink-0 appearance-none rounded-full border border-[#333] bg-white checked:bg-[radial-gradient(circle,#333_0_5px,#fff_6px)] disabled:border-[#c4c4c4] disabled:checked:bg-[radial-gradient(circle,#c8c8c8_0_5px,#fff_6px)]';
const SMALL_RADIO = 'm-0 size-3.5 shrink-0 appearance-none rounded-full border border-[#333] bg-white checked:bg-[radial-gradient(circle,#333_0_4px,#fff_5px)] disabled:border-[#c4c4c4] disabled:checked:bg-[radial-gradient(circle,#c8c8c8_0_4px,#fff_5px)]';

function Check({ label }: { label: string }) {
  return (
    <label className="flex h-6 items-center gap-[3px]">
      <input type="checkbox" className="size-4 shrink-0 appearance-none border border-[#333] bg-white checked:bg-[#333]" />
      {label}
    </label>
  );
}

function Radio({ name, label, checked, disabled }: { name: string; label: string; checked?: boolean; disabled?: boolean }) {
  return (
    <label className={`flex h-6 items-center gap-[3px] ${disabled ? 'text-[#7a7a7a]' : ''}`}>
      <input type="radio" name={name} defaultChecked={checked} disabled={disabled} className={`size-4 ${RADIO}`} />
      <span><Mnemonic text={label} /></span>
    </label>
  );
}

function Alignment({ name, disabled }: { name: string; disabled?: boolean }) {
  return (
    <div role="radiogroup" aria-label={name} className="grid grid-cols-[24px_25px_14px] gap-y-3">
      {Array.from({ length: 9 }, (_, i) => (
        <input key={i} type="radio" name={name} aria-label={`Position ${i + 1}`} defaultChecked={i === 4} disabled={disabled} className={SMALL_RADIO} />
      ))}
    </div>
  );
}

function Offset({ node, axis, initial }: { node: string; axis: string; initial: string }) {
  const [value, setValue] = useState(initial);
  const step = (d: number) => setValue((v) => (Number(v) + d).toFixed(2));
  const id = `e-${node}${axis}`;
  const half = 'flex h-2.5 w-[15px] items-center justify-center border border-[#b4b4b4] bg-[#ececec]';
  return (
    <div className="flex h-7 items-center">
      <label htmlFor={id} className="w-[35px] pt-0.5 text-[11px]">
        e<span className="relative top-0.5">{node},{axis}</span>
      </label>
      <div className="flex h-6 w-24 items-center border border-[#7a9cc0] bg-white pr-px">
        <input id={id} value={value} onChange={(e) => setValue(e.target.value)} className="h-full w-0 flex-1 pr-[5px] text-right outline-none" />
        <div className="flex flex-col">
          <button aria-label="Increase" onClick={() => step(0.01)} className={half}><span className="border-x-4 border-b-4 border-x-transparent border-b-black" /></button>
          <button aria-label="Decrease" onClick={() => step(-0.01)} className={half}><span className="border-x-4 border-t-4 border-x-transparent border-t-black" /></button>
        </div>
        <button aria-label="Choose" className="ml-px flex h-5 w-3 items-center justify-center border border-[#b4b4b4] bg-[#ececec]">
          <span className="border-y-4 border-l-4 border-y-transparent border-l-black" />
        </button>
      </div>
      <span className="ml-2">[in]</span>
    </div>
  );
}

const SUNK = 'border border-t-[#999] border-l-[#999] border-r-white border-b-white';
const SQUARE = 'flex h-[26px] items-center justify-center border border-[#adadad] bg-[#e1e1e1]';

const ArrowHeads = () => (
  <defs>
    {[['k', '#333'], ['r', '#e31b23'], ['g', '#13a04c'], ['b', '#352d86']].map(([id, c]) => (
      <marker key={id} id={`head-${id}`} markerUnits="userSpaceOnUse" markerWidth="20" markerHeight="14" refX="18" refY="7" orient="auto">
        <path d="M0 0l20 7-20 7z" fill={c} />
      </marker>
    ))}
  </defs>
);

function AbsolutePicture() {
  const sub = (x: number, y: number, s: string) => (
    <text x={x} y={y} fill="#333">e<tspan fontSize="30" dy="8">{s}</tspan></text>
  );
  return (
    <svg viewBox="34 139 996 736" className="size-full" fill="none" strokeWidth="3" fontSize="42" fontFamily="Liberation Sans">
      <ArrowHeads />
      <g fill="#e9ebec" stroke="#55506e" strokeWidth="4" strokeLinejoin="round">
        <path d="M446 704l211-74 61 17-150 91z" />
        <path d="M507 540l150-35v125L507 719z" />
        <path d="M446 530l152-92 120 36-150 91z" />
        <path d="M507 719l61 19M446 704l61-36" />
      </g>
      <g stroke="#333">
        <path d="M316 593L645 342" strokeDasharray="5 8" />
        <path d="M385 707l409-246" strokeDasharray="16 8 4 8" />
        <path d="M645 342l57-43" markerEnd="url(#head-k)" />
        <path d="M702 299l90 25" markerEnd="url(#head-k)" />
        <path d="M794 324v130" markerEnd="url(#head-k)" />
        <path d="M280 620l36-26" markerEnd="url(#head-k)" />
        <path d="M316 593l65 18" markerEnd="url(#head-k)" />
        <path d="M385 614v86" markerEnd="url(#head-k)" />
      </g>
      <path d="M251 641l46-33" stroke="#e31b23" markerEnd="url(#head-r)" />
      <path d="M385 707l62-36" stroke="#e31b23" markerEnd="url(#head-r)" />
      <path d="M251 641l62 18" stroke="#13a04c" markerEnd="url(#head-g)" />
      <path d="M385 707l62 22" stroke="#13a04c" markerEnd="url(#head-g)" />
      <path d="M251 641v56" stroke="#352d86" markerEnd="url(#head-b)" />
      <path d="M385 707v73" stroke="#352d86" markerEnd="url(#head-b)" />
      <g fill="#333"><circle cx="702" cy="299" r="6" /><circle cx="794" cy="324" r="6" /><circle cx="316" cy="594" r="6" /><circle cx="385" cy="614" r="6" /></g>
      <g fill="#e31b23"><circle cx="645" cy="342" r="8" /><circle cx="794" cy="461" r="8" /><circle cx="251" cy="641" r="8" /><circle cx="385" cy="707" r="8" /></g>
      {sub(634, 306, 'x')}
      {sub(742, 297, 'y')}
      {sub(806, 390, 'z')}
      {sub(237, 600, 'x')}
      {sub(326, 634, 'y')}
      {sub(395, 655, 'z')}
      <g fill="#e31b23" fontWeight="bold">
        <text x="219" y="648">i</text>
        <text x="346" y="726">i'</text>
        <text x="666" y="366">j</text>
        <text x="810" y="481">j'</text>
      </g>
      <g fill="#e31b23"><text x="300" y="643">x</text><text x="441" y="660">x'</text></g>
      <g fill="#13a04c"><text x="318" y="675">y</text><text x="456" y="752">y'</text></g>
      <g fill="#352d86"><text x="241" y="729">z</text><text x="374" y="810">z'</text></g>
    </svg>
  );
}

function AxialPicture() {
  const column = (
    <>
      <path d="M296 158l80 10v430l-80-8z" fill="#dadcdb" />
      <path d="M276 170l20-10v432l-20 8z" fill="#c6c8c7" />
      <path d="M376 180l51-22v430l-51 20z" fill="#c6c8c7" />
      <path d="M258 168l60-21h9v12l-51 13v428h-18z" fill="#a9abaa" />
      <path d="M258 170h18v430h-18zM360 180h17v428h-17z" fill="#949695" />
      <path d="M360 180v-4l58-19h9v5l-50 18z" fill="#a9abaa" />
      <path d="M300 162l80 8" />
    </>
  );
  return (
    <svg viewBox="34 28 996 736" className="size-full" stroke="#3d3d3d" strokeWidth="3" strokeLinejoin="round">
      {column}
      <g transform="translate(381 35)">{column}</g>
      <path d="M400 316l240 22v152l-240-26z" fill="#d9dbda" />
      <path d="M676 348v146" />
      <path d="M318 297l25-7 382 40v20l-25 4-382-40z" fill="#a8aaa9" />
      <path d="M385 302l40-13 215 22v16z" fill="#b8bab9" />
      <path d="M318 297l380 41v15M698 338l27-7" fill="none" />
      <path d="M318 459l25-7 382 41v19l-25 5-382-41z" fill="#a8aaa9" />
      <path d="M318 459l380 42v16M698 501l27-8" fill="none" />
      <path d="M360 180h17v428h-17zM640 205h16v430h-16z" fill="#949695" />
      <path d="M514 383l25 16-25 13z" fill="#6d6d6d" stroke="none" />
    </svg>
  );
}

function SectionPicture() {
  return (
    <svg viewBox="1024 493 346 250" className="size-full" fontFamily="Open Sans" fontWeight="bold" fontSize="42">
      <path d="M1122 518h152v14h-56q-14 2-14 18v136q0 16 14 18h56v14h-152v-14h56q14-2 14-18V550q0-16-14-18h-56z" fill="#d8dad9" stroke="#777" strokeWidth="5" />
      <g fill="#7d7d7d">
        {[[1123, 518], [1198, 518], [1272, 518], [1123, 619], [1272, 619], [1123, 719], [1198, 719], [1272, 719]].map(([x, y]) => <circle key={`${x}-${y}`} cx={x} cy={y} r="6" />)}
      </g>
      <path d="M1198 619v52" stroke="#2d2a86" strokeWidth="6" />
      <path d="M1188 664h20l-10 26z" fill="#2d2a86" />
      <path d="M1198 619h40" stroke="#13a04c" strokeWidth="5" />
      <path d="M1234 608l24 11-24 11z" fill="#13a04c" />
      <circle cx="1198" cy="619" r="7" fill="#ee1c24" />
      <text x="1243" y="597" fill="#13a04c">y</text>
      <text x="1214" y="689" fill="#2d2a86">z</text>
    </svg>
  );
}

const CREAM = 'bg-linear-to-bl from-[#fdf5da] via-[#fffcf2] to-[#ffffff]';

function Preview({ title, children }: { title: string; children: ReactNode }) {
  return (
    <figure className={`relative h-[246px] ${SUNK} ${CREAM}`}>
      {children}
      <figcaption className={`absolute top-0 left-0.5 text-[14px] leading-[18px] text-black ${HEAD_FONT}`}>{title}</figcaption>
    </figure>
  );
}

function EccentricityDialog() {
  return (
    <div role="dialog" aria-label="Edit Member Eccentricity" className={`absolute top-[66px] left-[188px] flex w-[807px] flex-col border border-[#6e6e6e] bg-[#f0f0f0] text-[13px] text-black shadow-[0_6px_18px_rgba(0,0,0,0.4)] ${DIALOG_FONT}`}>
      <div className={`flex h-[31px] items-center justify-between bg-white pl-[3px] text-[14px] ${UI_FONT}`}>
        <h2>Edit Member Eccentricity</h2>
        <button aria-label="Close" className="mr-[15px]">
          <svg viewBox="0 0 12 12" className="size-3"><path d="M0 0l12 12M12 0L0 12" stroke="#111" strokeWidth="1.100" /></svg>
        </button>
      </div>

      <div className="flex gap-2 px-[9px] pt-2.5">
        <div className="flex w-[219px] flex-col gap-3">
          <Group title="Member Eccentricity _No." className="h-14">
            <input aria-label="Member Eccentricity No." readOnly value="1" className="mt-1.5 ml-[3px] h-6 w-[53px] border border-[#7a7a7a] bg-[#f0f0f0] pl-1.5" />
          </Group>
          <Group title="Absolute Offset" className="h-[504px]">
            <div className="flex flex-col pr-1.5 pl-[3px] leading-4">
              <p className="mt-2.5">Reference system</p>
              <div className="mt-[3px]">
                <Radio name="system" label="_Local x,y,z" checked />
                <Radio name="system" label="_Global X,Y,Z" />
              </div>
              <Rule className="mt-3" />
              <p className="mt-2 mb-1">Member start i</p>
              <Offset node="i" axis="x" initial="0.39" />
              <Offset node="i" axis="y" initial="0.79" />
              <Offset node="i" axis="z" initial="1.18" />
              <div className="mt-5 ml-[43px] flex gap-[5px]">
                <button aria-label="Copy to end" className={`w-[30px] ${SQUARE}`}>
                  <svg viewBox="0 0 12 12" className="size-3"><path d="M0 1h4l2 5 2-5h4L8 11H4z" fill="#e2343c" stroke="#8b1016" strokeWidth=".7" /><path d="M5 5h2v3H5z" fill="#f9c6c6" /></svg>
                </button>
                <button aria-label="Copy to start" className={`w-[30px] ${SQUARE}`}>
                  <svg viewBox="0 0 12 12" className="size-3"><path d="M0 11L5 1h2l5 10z" fill="#e2343c" stroke="#8b1016" strokeWidth=".7" /><path d="M5 4h2v6H5z" fill="#f9c6c6" /></svg>
                </button>
              </div>
              <p className="mt-[22px] mb-0.5">Member end j</p>
              <Offset node="j" axis="x" initial="-0.39" />
              <Offset node="j" axis="y" initial="-0.79" />
              <Offset node="j" axis="z" initial="-1.18" />
              <Rule className="mt-3" />
              <p className="mt-2.5 whitespace-nowrap">Member hinge location at end node<br />(if the hinge is set)</p>
              <div className="mt-[3px]">
                <Check label="Member start" />
                <Check label="Member end" />
              </div>
            </div>
          </Group>
        </div>

        <div className="flex w-[219px] flex-col gap-3">
          <Group className="h-14" />
          <Group title="Relative Offset" className="h-[504px]">
            <div className="flex flex-col pr-1 pl-1 leading-4">
              <p className="mt-2.5">Cross-section alignment</p>
              <div className="mt-1.5 flex justify-between">
                <div className="pt-0.5"><Alignment name="alignment" /></div>
                <div className={`h-[84px] w-[116px] ${SUNK} ${CREAM}`}><SectionPicture /></div>
              </div>
              <Rule className="mt-2.5" />
              <label className="mt-2 flex gap-[3px]">
                <input type="checkbox" className="mt-0.5 size-4 shrink-0 appearance-none border border-[#333] bg-white checked:bg-[#333]" />
                <span className="whitespace-nowrap">Transverse offset from cross-<br />section of other object</span>
              </label>
              <div className="mt-4 flex">
                <div className="w-[103px]">
                  <p>Object:</p>
                  <div className="mt-0.5">
                    <Radio name="object" label="_Member" checked disabled />
                    <Radio name="object" label="_Surface" disabled />
                  </div>
                </div>
                <div>
                  <label htmlFor="object-no">No.</label>
                  <div className="mt-1 flex items-center gap-[7px]">
                    <div className="flex h-6 w-[61px] items-center border border-[#ccc] bg-white pl-0.5">
                      <select id="object-no" disabled className="h-[18px] w-[34px] appearance-none bg-[#f0f0f0]"><option></option></select>
                      <ChevronDown className="ml-1.5 size-3.5 text-[#999]" strokeWidth={1.5} />
                    </div>
                    <button disabled aria-label="Pick" className="flex h-[26px] w-[29px] items-center justify-center border border-[#bfbfbf] bg-[#ccc]">
                      <svg viewBox="0 0 20 20" className="size-5"><path d="M3 2l6 2M5 5l3-4M9 2v5M4 2h6" stroke="#555" strokeWidth="1.500" /><path d="M8 6l1-1 2 4 3 1 1 3v5l-2 1-3-4-3-1 1-2 1 1z" fill="#eee" stroke="#777" /></svg>
                    </button>
                  </div>
                </div>
              </div>
              <p className="mt-5">Axis offset</p>
              <div className="mt-[5px] flex justify-between">
                <div className="pt-0.5"><Alignment name="axis" disabled /></div>
                <div className={`h-[84px] w-[116px] ${SUNK}`} />
              </div>
              <Rule className="mt-2.5" />
              <p className="mt-2.5">Axial offset from adjoining<br />members at:</p>
              <div className="mt-[3px]">
                <Check label="Member start" />
                <Check label="Member end" />
              </div>
            </div>
          </Group>
        </div>

        <div className="flex min-w-0 flex-1 flex-col gap-3 pl-px">
          <Preview title="Absolute Offset"><AbsolutePicture /></Preview>
          <Preview title="Axial Offset"><AxialPicture /></Preview>
          <Group title="_Comment" className="h-14">
            <div className="mt-1.5 flex gap-1 px-[3px]">
              <div className="flex h-6 w-[291px] items-center border border-[#6e6e6e] bg-white">
                <input aria-label="Comment" defaultValue="eccentricity 1" className="h-full min-w-0 flex-1 pl-1.5 outline-none" />
                <ChevronDown className="mr-0.5 size-4 text-[#333]" strokeWidth={1.5} />
              </div>
              <button aria-label="Comments" className={`w-[30px] ${SQUARE}`}>
                <svg viewBox="0 0 20 16" className="h-4 w-5"><path d="M1 1h5l1 1h6v7H1zM4 4h5l1 1h5v7H4zM7 7h5l1 1h6v7H7z" fill="#d4c784" stroke="#6c6234" /><path d="M13 9h3v4l-2-1-1 1z" fill="#fff" stroke="#555" strokeWidth=".6" /></svg>
              </button>
            </div>
          </Group>
        </div>
      </div>

      <div className="px-[9px] pt-2 pb-[11px]">
        <Rule />
        <div className="mt-[14px] flex items-center gap-2.5 pl-px">
          <button aria-label="Help" className={`w-[30px] ${SQUARE}`}>
            <svg viewBox="0 0 20 20" className="size-5"><circle cx="10" cy="9" r="8" fill="#cfdbe9" stroke="#8b9096" strokeWidth="2" /><path d="M5 15l1 5 4-3z" fill="#9aa2ac" /><text x="6" y="15" fontSize="15" fontWeight="bold" fill="#24427f" fontFamily="Liberation Serif">?</text></svg>
          </button>
          <button aria-label="Edit" className={`w-[30px] ${SQUARE}`}>
            <svg viewBox="0 0 20 20" className="size-5"><path d="M1 1h11l3 3v15H1z" fill="#fafafa" stroke="#555" /><path d="M3 8h7M3 11h6M3 14h6M3 17h9" stroke="#555" /><path d="M9 15l1-4 6-8 3 2-6 9z" fill="#f4cf1d" stroke="#5f4a05" /><path d="M9 15l1-3 2 1z" fill="#222" /><path d="M16 3l2-2 2 2-1 2z" fill="#e89aa8" /></svg>
          </button>
          <button aria-label="Units" className="flex h-[26px] w-[30px] items-center justify-center border-2 border-[#0078d7] bg-[#e1e1e1]">
            <svg viewBox="0 0 20 20" className="size-5"><path d="M0 1h20v5H0z" fill="#8fd07c" stroke="#5b9a4a" strokeWidth=".6" /><path d="M3 4v2M6 4v2M9 4v2M12 4v2M15 4v2" stroke="#3d6e30" strokeWidth=".8" /><path d="M8 16h12v3H8z" fill="#9aa8c6" /><text x="0" y="17" fontSize="11" fontStyle="italic" fontWeight="bold" fill="#1c2b58" fontFamily="Liberation Serif">0.00</text></svg>
          </button>
          <button className={`ml-auto w-[86px] ${SQUARE}`}>OK</button>
          <button className={`w-[86px] ${SQUARE}`}>Cancel</button>
        </div>
      </div>
    </div>
  );
}

/* ---------- status bar ---------- */

function StatusBar() {
  const cell = 'flex h-[25px] items-center border border-t-black border-l-black border-r-white border-b-white bg-linear-to-b from-[#ccd0da] via-[#a9b0bb] to-[#b9bfca] pb-1';
  return (
    <footer className={`flex h-7 items-center justify-end border-t border-b border-t-[#9ca1ac] border-b-[#4a4a50] bg-linear-to-b from-[#dfe3ec] via-[#a6adb7] to-[#b9bfca] text-[13px] text-[#26282c] ${HEAD_FONT}`}>
      <div className="flex gap-0.5">
        <button className={`w-[42px] pl-px ${cell}`}>SNAP</button>
        <button className={`w-10 pl-px ${cell}`}>GRID</button>
        <button className={`w-16 pl-1.5 ${cell}`}>CARTES</button>
        <button className={`w-[53px] pl-px ${cell}`}>OSNAP</button>
        <button className={`w-[53px] pl-px ${cell}`}>GLINES</button>
        <button className={`w-[33px] pl-px ${cell}`}>DXF</button>
      </div>
      <span className="ml-px h-6 w-[189px] border-l border-[#8f959f]" />
      <span className="h-6 w-[88px] border-l border-[#8f959f]" />
      <span className="h-6 w-[74px] border-l border-[#8f959f]" />
      <span className="h-6 w-[74px] border-l border-[#8f959f]" />
      <span className="flex h-6 w-24 items-end justify-end border-l border-[#8f959f]">
        <svg viewBox="0 0 12 12" className="size-3"><path d="M8 0h2v2H8zM8 4h2v2H8zM8 8h2v2H8zM4 4h2v2H4zM4 8h2v2H4zM0 8h2v2H0z" fill="#6d727c" /></svg>
      </span>
    </footer>
  );
}

export default function App() {
  return (
    <div className={`flex h-screen flex-col overflow-hidden bg-[#d0d4dd] ${UI_FONT}`}>
      <TitleBar />
      <MenuBar />
      <ToolbarRow groups={rowOne} />
      <ToolbarRow groups={rowTwo} />
      <main className="flex min-h-0 flex-1">
        <Navigator />
        <div className="relative mr-1 mb-0.5 ml-1.5 min-w-0 flex-1 border-t border-l border-[#5f6268] bg-white">
          <div className="absolute inset-0 overflow-hidden"><WorkPlane /></div>
          <EccentricityDialog />
        </div>
      </main>
      <StatusBar />
    </div>
  );
}
